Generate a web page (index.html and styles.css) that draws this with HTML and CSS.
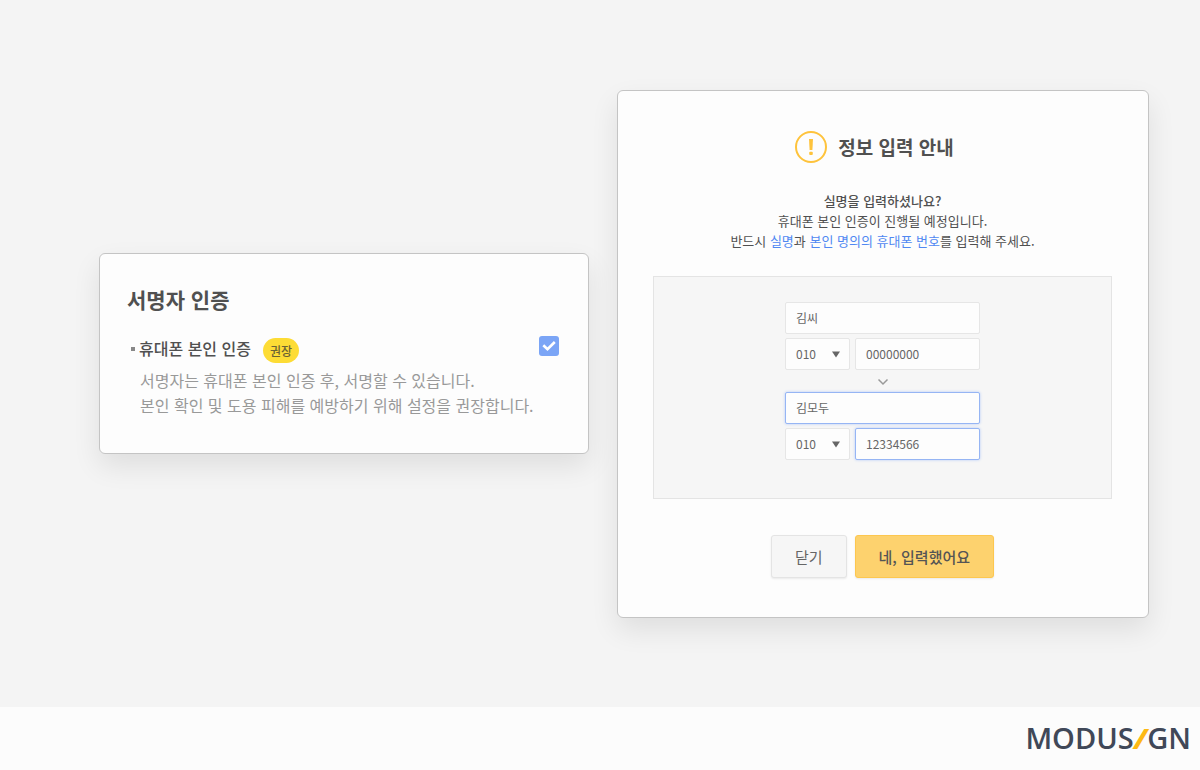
FILE: index.html
```html
<!DOCTYPE html>
<html lang="ko">
<head>
<meta charset="utf-8">
<meta name="viewport" content="width=device-width, initial-scale=1">
<title>MODUSIGN</title>
<link rel="stylesheet" href="styles.css">
</head>
<body>
<main class="stage">
  <section class="card auth">
    <h2 class="auth-title">서명자 인증</h2>
    <div class="auth-row">
      <label class="auth-label" for="phone-auth">휴대폰 본인 인증 <span class="badge">권장</span></label>
      <span class="check">
        <input class="check-input" type="checkbox" id="phone-auth" checked>
        <svg class="check-mark" viewBox="0 0 20 20" aria-hidden="true"><path d="M4.300 9.200 8.500 13.200 15.800 6"/></svg>
      </span>
    </div>
    <p class="auth-desc">서명자는 휴대폰 본인 인증 후, 서명할 수 있습니다.<br>본인 확인 및 도용 피해를 예방하기 위해 설정을 권장합니다.</p>
  </section>

  <section class="card notice">
    <header class="notice-head">
      <svg class="notice-icon" viewBox="0 0 32 32" aria-hidden="true">
        <circle cx="16" cy="16" r="15"/>
        <path d="M14 8h4l-.6 11h-2.8z"/>
        <rect x="14.2" y="20.7" width="3.6" height="3.4" rx="1"/>
      </svg>
      <h2 class="notice-title">정보 입력 안내</h2>
    </header>
    <p class="notice-text"><strong class="notice-ask">실명을 입력하셨나요?</strong><br>휴대폰 본인 인증이 진행될 예정입니다.<br>반드시 <em class="mark">실명</em>과 <em class="mark">본인 명의의 휴대폰 번호</em>를 입력해 주세요.</p>

    <div class="panel">
      <div class="fields">
        <input class="field" type="text" value="김씨" aria-label="이름 예시">
        <div class="phone">
          <span class="prefix">
            <select class="field" aria-label="국번 예시"><option>010</option></select>
            <svg class="prefix-arrow" viewBox="0 0 8 7" aria-hidden="true"><path d="M0 .5h8L4 6.5z"/></svg>
          </span>
          <input class="field" type="tel" value="00000000" aria-label="전화번호 예시">
        </div>
        <svg class="down" viewBox="0 0 12 22" aria-hidden="true"><path d="M1.500 9.500 6 14 10.500 9.500"/></svg>
        <input class="field active" type="text" value="김모두" aria-label="이름">
        <div class="phone">
          <span class="prefix">
            <select class="field" aria-label="국번"><option>010</option></select>
            <svg class="prefix-arrow" viewBox="0 0 8 7" aria-hidden="true"><path d="M0 .5h8L4 6.5z"/></svg>
          </span>
          <input class="field active" type="tel" value="12334566" aria-label="전화번호">
        </div>
      </div>
    </div>

    <div class="actions">
      <button class="btn" type="button">닫기</button>
      <button class="btn primary" type="button">네, 입력했어요</button>
    </div>
  </section>
</main>
<footer class="footer"><span class="logo">MODUS<span class="slash">/</span>GN</span></footer>
</body>
</html>
```
FILE: styles.css
```css
* { box-sizing: border-box; }

body {
  margin: 0;
  min-height: 100vh;
  display: flex;
  flex-direction: column;
  background: #f4f4f4;
  color: #505050;
  font-family: "Noto Sans CJK KR", sans-serif;
}

h2, p { margin: 0; }

.stage {
  flex: 1;
  display: grid;
  grid-template-columns: minmax(0, 490fr) minmax(0, 532fr);
  align-items: center;
  gap: 28px;
  padding: 24px 51px 24px 99px;
}

.card {
  background: #fdfdfd;
  border: 1px solid #c4c4c4;
  border-radius: 6px;
  box-shadow: 0 12px 28px rgba(0, 0, 0, 0.09);
}

.auth { padding: 29px 29px 35px 27px; }

.auth-title {
  font-size: 21px;
  line-height: 32px;
  font-weight: 700;
}

.auth-row {
  display: flex;
  align-items: flex-start;
  justify-content: space-between;
  margin-top: 21px;
}

.auth-label {
  display: flex;
  align-items: flex-start;
  margin-top: 2px;
  padding-left: 4px;
  font-size: 16px;
  line-height: 21px;
  font-weight: 500;
}

.auth-label::before {
  content: "";
  width: 4px;
  height: 4px;
  margin: 9px 4px 0 0;
  background: #888;
}

.badge {
  margin-left: 12px;
  padding: 0 7px;
  border-radius: 13px;
  background: #fddc35;
  color: #6b6234;
  font-size: 12px;
  line-height: 25px;
}

.check {
  position: relative;
  width: 20px;
  height: 20px;
}

.check-input {
  appearance: none;
  display: block;
  width: 20px;
  height: 20px;
  margin: 0;
  border-radius: 3px;
  background: #7ba5f6;
}

.check-mark {
  position: absolute;
  inset: 0;
  fill: none;
  stroke: #fff;
  stroke-width: 2.600;
  pointer-events: none;
}

.auth-desc {
  margin-top: 5px;
  padding-left: 13px;
  color: #999;
  font-size: 16px;
  line-height: 25px;
}

.notice { padding: 40px 36px 39px 35px; }

.notice-head {
  display: flex;
  align-items: center;
  justify-content: center;
  gap: 11px;
  padding-right: 16px;
}

.notice-icon {
  width: 32px;
  height: 32px;
  fill: #fec33c;
}

.notice-icon circle {
  fill: none;
  stroke: #fec33c;
  stroke-width: 2;
}

.notice-title {
  font-size: 19px;
  line-height: 32px;
  font-weight: 700;
}

.notice-text {
  margin-top: 28px;
  text-align: center;
  font-size: 13px;
  line-height: 20px;
}

.notice-ask { font-weight: 500; }

.mark {
  color: #5088f2;
  font-style: normal;
}

.panel {
  margin-top: 25px;
  padding: 25px 24px 38px;
  border: 1px solid #e4e4e4;
  background: #f6f6f6;
}

.fields {
  display: flex;
  flex-direction: column;
  gap: 4px;
  width: 195px;
  margin: 0 auto;
}

.field {
  appearance: none;
  width: 100%;
  min-width: 0;
  height: 32px;
  padding: 0 10px;
  border: 1px solid #e6e6e6;
  border-radius: 2px;
  background: #fdfdfd;
  color: #666;
  font-family: inherit;
  font-size: 12px;
}

.field.active {
  border-color: #96b5f4;
  box-shadow: 0 0 3px #b4caf8;
}

.phone {
  display: flex;
  gap: 5px;
}

.prefix {
  position: relative;
  flex: 0 0 65px;
}

.prefix-arrow {
  position: absolute;
  right: 10px;
  top: 13px;
  width: 8px;
  height: 7px;
  fill: #666;
  pointer-events: none;
}

.down {
  align-self: center;
  width: 12px;
  height: 22px;
  margin: -4px 0;
  fill: none;
  stroke: #999;
  stroke-width: 1.500;
}

.actions {
  display: flex;
  justify-content: center;
  gap: 8px;
  margin-top: 36px;
}

.btn {
  padding: 0 23px;
  border: 1px solid #e4e4e4;
  border-radius: 3px;
  background: #f6f6f6;
  box-shadow: 0 1px 2px rgba(0, 0, 0, 0.08);
  color: #666;
  font-family: inherit;
  font-size: 15px;
  line-height: 41px;
}

.btn.primary {
  border-color: #fdc74f;
  background: #fdd26e;
  color: #555;
  font-weight: 500;
}

.footer {
  display: flex;
  align-items: center;
  justify-content: flex-end;
  height: 63px;
  padding: 0 9px 2px;
  background: #fcfcfc;
}

.logo {
  color: #404858;
  font-family: "Open Sans", sans-serif;
  font-size: 29px;
  font-weight: 600;
}

.slash {
  color: #fdb913;
  font-style: italic;
  font-weight: 800;
}
```
